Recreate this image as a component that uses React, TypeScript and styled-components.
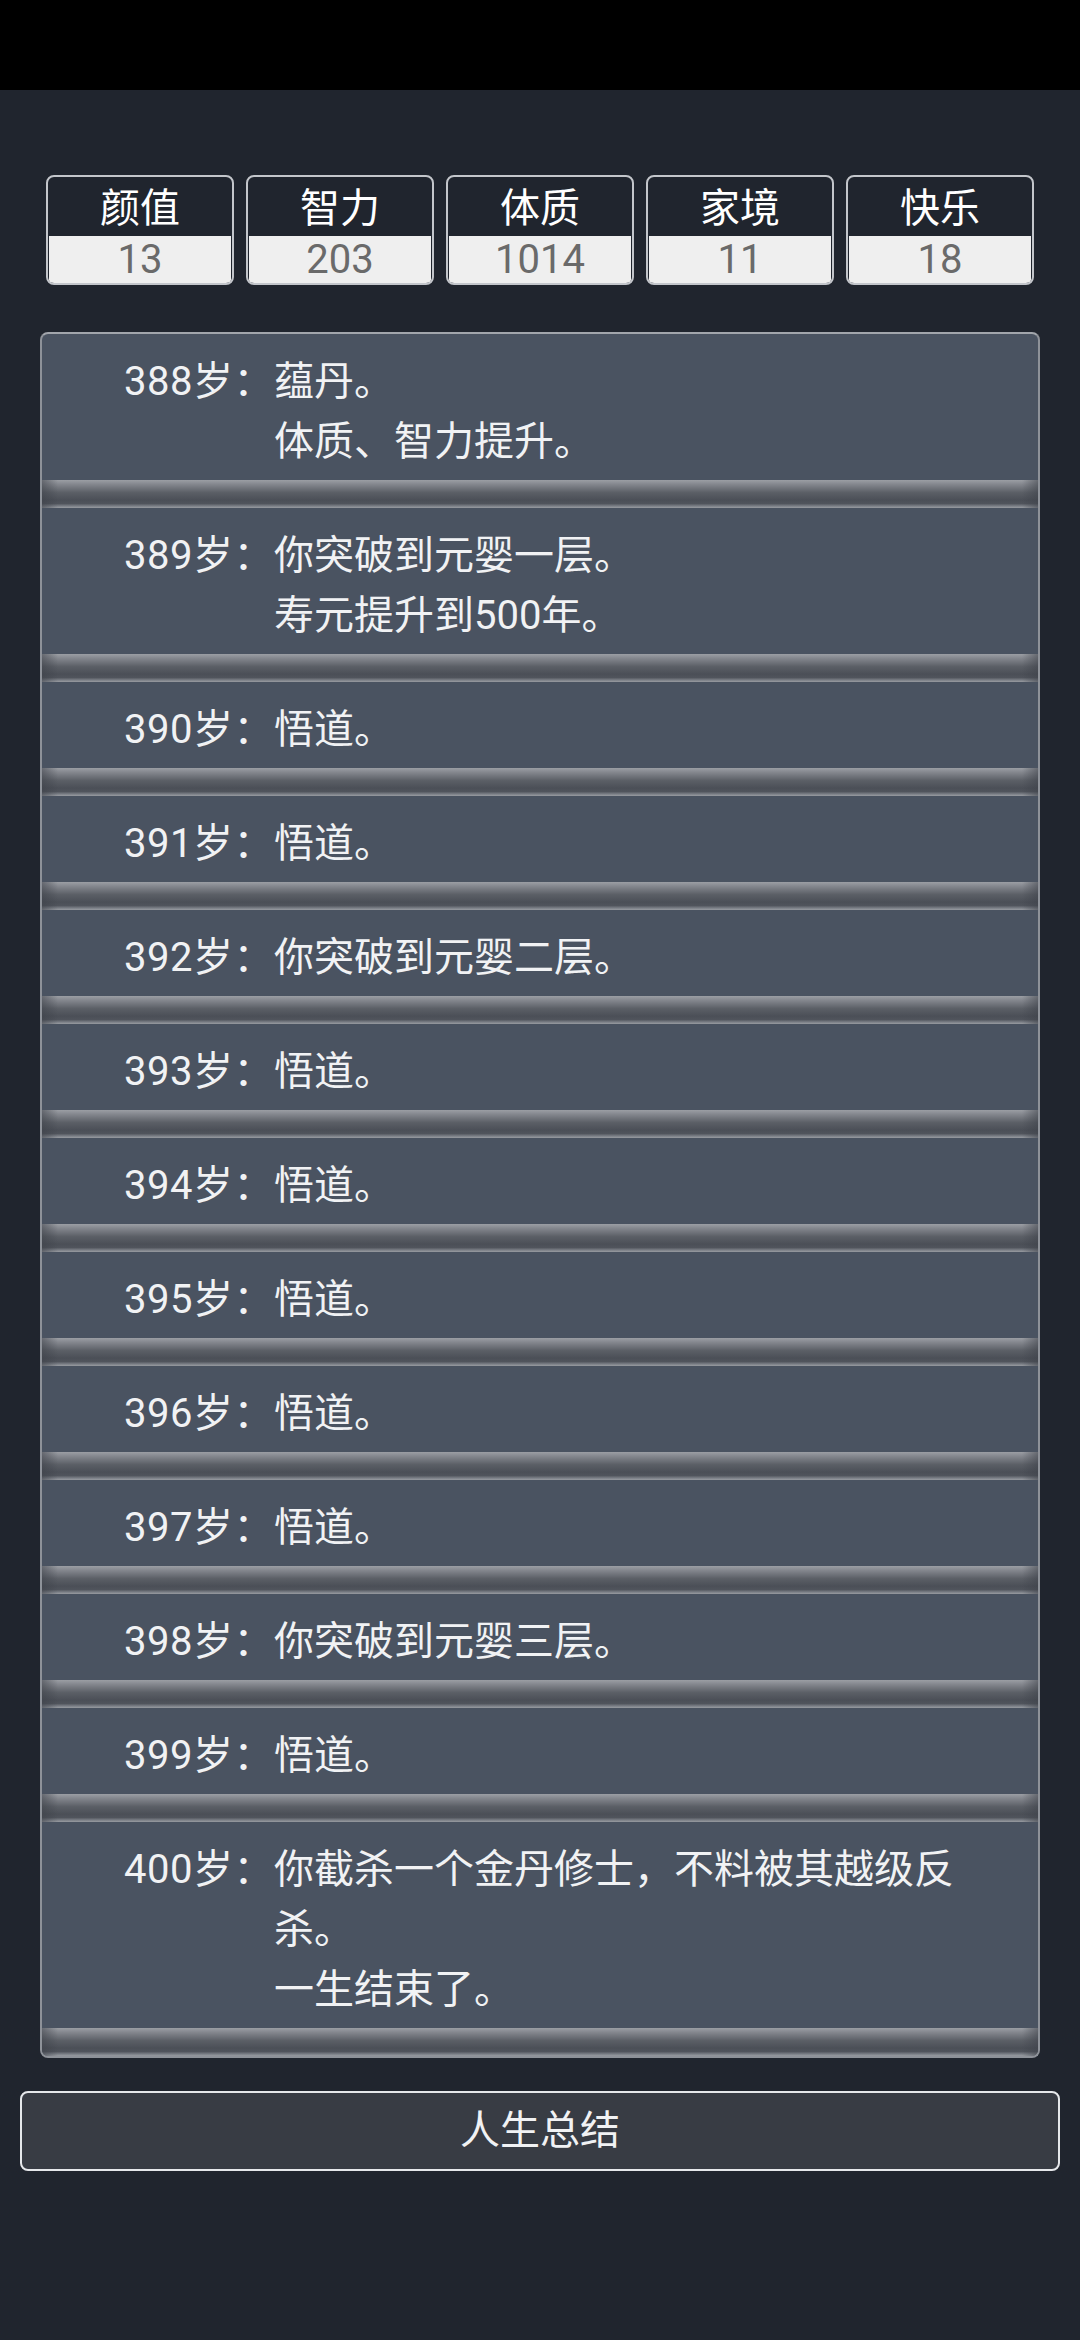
import React from "react";
import styled, { createGlobalStyle } from "styled-components";

const GlobalStyle = createGlobalStyle`
  html, body {
    margin: 0;
    padding: 0;
    background: #20252e;
  }
  body {
    font-family: Roboto, "Noto Sans CJK SC", sans-serif;
    -webkit-font-smoothing: antialiased;
  }
  * {
    box-sizing: border-box;
  }
`;

const Screen = styled.div`
  width: 1080px;
  min-height: 2340px;
  background: #20252e;
  display: flex;
  flex-direction: column;
`;

const StatusBar = styled.div`
  height: 90px;
  background: #000;
`;

const StatsRow = styled.div`
  display: grid;
  grid-template-columns: repeat(5, 1fr);
  gap: 12px;
  padding: 85px 46px 0;
`;

const StatBox = styled.div`
  height: 110px;
  border: 2px solid #c3c6cb;
  border-radius: 8px;
  padding: 0 1px 2px;
  display: flex;
  flex-direction: column;
  overflow: hidden;
`;

const StatLabel = styled.div`
  height: 59px;
  padding-top: 4px;
  line-height: 55px;
  text-align: center;
  font-size: 40px;
  color: #ffffff;
`;

const StatValue = styled.div`
  flex: 1;
  line-height: 47px;
  text-align: center;
  font-size: 40px;
  color: #6a6a6a;
  background: #efefef;
`;

const Panel = styled.ul`
  list-style: none;
  margin: 47px 40px 0;
  padding: 0;
  border: 2px solid #8e9299;
  border-top-color: #a2a6ac;
  border-radius: 8px;
  background: #4a5361;
  overflow: hidden;
`;

const Item = styled.li`
  &::after {
    content: "";
    display: block;
    height: 28px;
    background:
      linear-gradient(
        to right,
        rgba(60, 64, 72, 0.55) 0,
        rgba(60, 64, 72, 0) 16px,
        rgba(60, 64, 72, 0) calc(100% - 16px),
        rgba(60, 64, 72, 0.55) 100%
      ),
      linear-gradient(
        to bottom,
        #9b9ea4 0%,
        #80838a 18%,
        #5b5f66 45%,
        #4b4f57 72%,
        #50545c 84%,
        #7f838a 94%,
        #989ba1 100%
      );
  }
`;

const Entry = styled.div`
  display: grid;
  grid-template-columns: 232px 1fr;
  padding: 18px 40px 8px 0;
  font-size: 40px;
  line-height: 60px;
  color: #f1f2f4;
`;

const Age = styled.div`
  text-align: right;
  white-space: nowrap;
  letter-spacing: 0.5px;
`;

const Lines = styled.div`
  display: flex;
  flex-direction: column;
`;

const SummaryButton = styled.button`
  margin: 33px 20px 0;
  height: 80px;
  border: 2px solid #e6e8eb;
  border-radius: 8px;
  background: #383c44;
  color: #f1f2f4;
  font-family: Roboto, "Noto Sans CJK SC", sans-serif;
  font-size: 40px;
  line-height: 76px;
  padding: 0;
  text-align: center;
`;

const stats = [
  { label: "颜值", value: 13 },
  { label: "智力", value: 203 },
  { label: "体质", value: 1014 },
  { label: "家境", value: 11 },
  { label: "快乐", value: 18 },
];

const events: { age: number; lines: string[] }[] = [
  { age: 388, lines: ["蕴丹。", "体质、智力提升。"] },
  { age: 389, lines: ["你突破到元婴一层。", "寿元提升到500年。"] },
  { age: 390, lines: ["悟道。"] },
  { age: 391, lines: ["悟道。"] },
  { age: 392, lines: ["你突破到元婴二层。"] },
  { age: 393, lines: ["悟道。"] },
  { age: 394, lines: ["悟道。"] },
  { age: 395, lines: ["悟道。"] },
  { age: 396, lines: ["悟道。"] },
  { age: 397, lines: ["悟道。"] },
  { age: 398, lines: ["你突破到元婴三层。"] },
  { age: 399, lines: ["悟道。"] },
  { age: 400, lines: ["你截杀一个金丹修士，不料被其越级反杀。", "一生结束了。"] },
];

const App: React.FC = () => {
  return (
    <>
      <GlobalStyle />
      <Screen>
        <StatusBar />
        <StatsRow>
          {stats.map((s) => (
            <StatBox key={s.label}>
              <StatLabel>{s.label}</StatLabel>
              <StatValue>{s.value}</StatValue>
            </StatBox>
          ))}
        </StatsRow>
        <Panel>
          {events.map((e) => (
            <Item key={e.age}>
              <Entry>
                <Age>{e.age}岁：</Age>
                <Lines>
                  {e.lines.map((l, i) => (
                    <span key={i}>{l}</span>
                  ))}
                </Lines>
              </Entry>
            </Item>
          ))}
        </Panel>
        <SummaryButton>人生总结</SummaryButton>
      </Screen>
    </>
  );
};

export default App;
